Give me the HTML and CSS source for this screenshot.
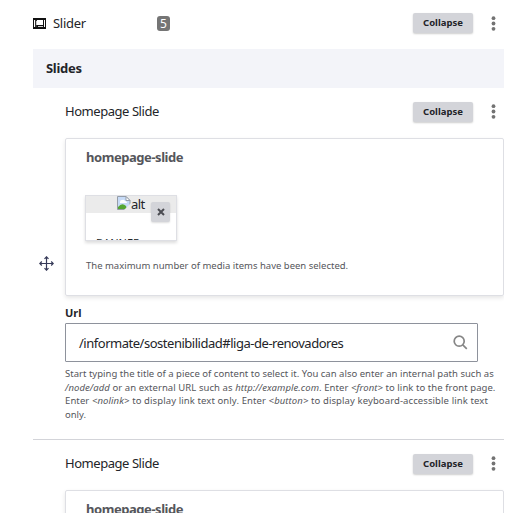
FILE: index.html
```html
<!DOCTYPE html>
<html lang="en">
<head>
<meta charset="utf-8">
<title>Slider</title>
<link rel="stylesheet" href="styles.css">
</head>
<body>
<main class="paragraph">
  <header class="top">
    <svg class="type-icon" width="13" height="11" viewBox="0 0 13 11" shape-rendering="crispEdges"><path d="M0 0h13v11H0z" fill="#111"/><path d="M1 2h1v7H1zM11 2h1v7h-1z" fill="#fff"/><path d="M4 2h6v5H4z" fill="#fff"/><path d="M2 2h2v7H2z" fill="#333"/><path d="M3 3h1v4H3zM5 8h5v1H5z" fill="#ccc"/></svg>
    <span class="name slider">Slider</span>
    <span class="badge">5</span>
    <button class="collapse">Collapse</button>
    <svg class="dots" width="5" height="15" viewBox="0 0 5 15"><circle cx="2.5" cy="2.2" r="1.9"/><circle cx="2.5" cy="7.5" r="1.9"/><circle cx="2.5" cy="12.8" r="1.9"/></svg>
  </header>
  <h2 class="bar"><span>Slides</span></h2>
  <section class="slide">
    <svg class="handle" width="15" height="15" viewBox="0 0 15 15"><path d="M7.5 1v13M1 7.5h13M5.500 2.800l2-2 2 2M5.500 12.200l2 2 2-2M2.800 5.500l-2 2 2 2M12.200 5.500l2 2-2 2"/></svg>
    <div class="content">
      <div class="row">
        <span class="name">Homepage Slide</span>
        <button class="collapse">Collapse</button>
        <svg class="dots" width="5" height="15" viewBox="0 0 5 15"><circle cx="2.5" cy="2.2" r="1.9"/><circle cx="2.5" cy="7.5" r="1.9"/><circle cx="2.5" cy="12.8" r="1.9"/></svg>
      </div>
      <div class="card">
        <h3><span>homepage-slide</span></h3>
        <div class="media">
          <div class="preview">
            <svg width="14" height="14" viewBox="0 0 14 14"><path d="M.5.5h8.500l4 4v9H.5z" fill="#c7dbf7" stroke="#959da8"/><path d="M9 .5v4h4z" fill="#fff" stroke="#959da8"/><path d="M3 6q0-2 2-2 2-1 3 1 2 0 2 2H3z" fill="#fff"/><path d="M1 13V11q4-5 8-1l1 3z" fill="#55a632"/><path d="M14 7L7 14h7z" fill="#ebebeb"/></svg><span>alt</span>
          </div>
          <div class="caption">BANNER</div>
          <button class="remove"><svg width="8" height="8" viewBox="0 0 8 8"><path d="M1 1l6 6M7 1L1 7"/></svg></button>
        </div>
        <p class="note"><span>The maximum number of media items have been selected.</span></p>
      </div>
      <label class="label">Url</label>
      <div class="field">
        <span>/informate/sostenibilidad#liga-de-renovadores</span>
        <svg width="15" height="15" viewBox="0 0 15 15"><circle cx="6.200" cy="6.200" r="5"/><path d="M9.800 9.800l4 4"/></svg>
      </div>
      <p class="help">
        <span class="l1">Start typing the title of a piece of content to select it. You can also enter an internal path such as</span><br>
        <span class="l2"><em>/node/add</em> or an external URL such as <em>http://example.com</em>. Enter <em>&lt;front&gt;</em> to link to the front page.</span><br>
        <span class="l3">Enter <em>&lt;nolink&gt;</em> to display link text only. Enter <em>&lt;button&gt;</em> to display keyboard-accessible link text</span><br>
        <span>only.</span>
      </p>
    </div>
  </section>
  <section class="slide next">
    <div class="content">
      <div class="row">
        <span class="name">Homepage Slide</span>
        <button class="collapse">Collapse</button>
        <svg class="dots" width="5" height="15" viewBox="0 0 5 15"><circle cx="2.5" cy="2.2" r="1.9"/><circle cx="2.5" cy="7.5" r="1.9"/><circle cx="2.5" cy="12.8" r="1.9"/></svg>
      </div>
      <div class="card">
        <h3><span>homepage-slide</span></h3>
      </div>
    </div>
  </section>
</main>
</body>
</html>
```
FILE: styles.css
```css
* { box-sizing: border-box; }
body { margin: 0; height: 513px; overflow: hidden; background: #fff; color: #232429; font-family: "Noto Sans", "Open Sans", sans-serif; }
h2, h3, p { margin: 0; }
button { border: 0; padding: 0; font-family: inherit; }
svg { display: block; flex: none; }
.paragraph { width: 471px; height: 513px; margin-left: 33px; overflow: hidden; }
.top { display: flex; align-items: center; height: 49px; padding: 0 8px 3px 0; }
.name { font-size: 13px; line-height: 20px; letter-spacing: -0.45px; white-space: nowrap; }
.slider { width: 104px; margin-left: 7px; letter-spacing: -0.3px; }
.badge { width: 13px; height: 15px; border-radius: 3px; background: #757575; color: #fff; font-size: 12px; line-height: 15px; text-align: center; }
.collapse { width: 60px; height: 20px; margin-left: auto; margin-right: 18px; border-radius: 2px; background: #d3d4d9; box-shadow: 0 1px 2px #0003; color: #232429; font-size: 9.5px; font-weight: 700; line-height: 20px; }
.dots { fill: #737373; }
.bar { height: 39px; padding-left: 13px; background: #f3f4f9; font-size: 13px; font-weight: 700; line-height: 39px; letter-spacing: -0.3px; }
.slide { display: flex; position: relative; height: 352px; padding-left: 32px; border-bottom: 1px solid #d3d4d9; }
.next { height: 73px; border: 0; }
.handle { position: absolute; left: 6px; top: 168px; fill: none; stroke: #373b59; stroke-width: 1.2; }
.content { width: 439px; }
.row { display: flex; align-items: center; height: 50px; padding: 0 8px 2px 0; }
.row .name { margin-top: -2px; }
.row .dots { margin-top: -1px; }
.card { height: 158px; padding: 0 19px 0 20px; border: 1px solid #dedfe4; border-radius: 2px; box-shadow: 0 2px 4px #0000001a; }
.card h3 { height: 56px; color: #55565b; font-size: 13px; font-weight: 700; line-height: 37px; letter-spacing: -0.45px; }
.media { position: relative; width: 92px; height: 46px; margin-left: -1px; overflow: hidden; border: 1px solid #dedfe4; box-shadow: 0 2px 3px #0002; }
.preview { display: flex; height: 17px; padding-left: 31px; background: #ebebeb; font-size: 13px; line-height: 17px; letter-spacing: -0.6px; }
.caption { height: 28px; padding: 22px 0 0 10px; overflow: hidden; font-size: 11px; line-height: 15px; }
.remove { position: absolute; left: 65px; top: 6px; display: grid; place-items: center; width: 19px; height: 20px; border-radius: 2px; background: #d3d4d9; box-shadow: 0 1px 2px #0002; }
.remove svg { fill: none; stroke: #4b4c52; stroke-width: 2; }
.note { padding-top: 17px; color: #55565b; font-size: 9.5px; line-height: 15px; white-space: nowrap; }
.label { display: block; height: 27px; padding-top: 9px; font-size: 11px; font-weight: 700; line-height: 16px; }
.field { display: flex; align-items: center; justify-content: space-between; width: 413px; height: 39px; padding: 0 9px 0 13px; border: 1px solid #8e929c; border-radius: 1px; font-size: 13px; letter-spacing: -0.48px; white-space: nowrap; }
.field svg { fill: none; stroke: #868686; stroke-width: 1.7; }
.help { padding-top: 5px; color: #55565b; font-size: 9.5px; line-height: 13.500px; white-space: nowrap; }
.l1 { letter-spacing: 0.02px; }
.l2 { letter-spacing: 0.07px; }
.l3 { letter-spacing: 0.1px; }
```
